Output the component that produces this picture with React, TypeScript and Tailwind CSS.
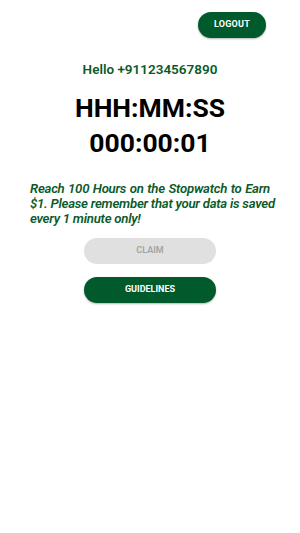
import React from "react";

export default function App() {
  return (
    <div
      className="w-[300px] h-[533px] bg-white flex flex-col"
      style={{ fontFamily: "Roboto, 'Liberation Sans', sans-serif" }}
    >
      <div className="flex justify-end pt-[12px] pr-[34px]">
        <button className="w-[68px] h-[26px] rounded-full bg-[#005a2c] text-white text-[9px] font-bold tracking-[0.2px] shadow-[0_1px_2px_rgba(0,0,0,0.3)]">
          LOGOUT
        </button>
      </div>
      <div className="mt-[23px] text-center text-[13.5px] font-semibold text-[#0b5a2a] leading-[16px]">
        Hello +911234567890
      </div>
      <div className="mt-[13px] text-center text-[26.5px] font-bold text-black leading-[35px]">
        <div>HHH:MM:SS</div>
        <div>000:00:01</div>
      </div>
      <div className="mt-[21px] px-[30px] text-[13.2px] italic font-semibold text-[#0b5a2a] leading-[15px] tracking-[-0.25px]">
        <p className="whitespace-nowrap text-justify [text-align-last:justify]">Reach 100 Hours on the Stopwatch to Earn</p>
        <p className="whitespace-nowrap text-justify [text-align-last:justify]">$1. Please remember that your data is saved</p>
        <p className="whitespace-nowrap">every 1 minute only!</p>
      </div>
      <div className="mt-[12px] flex flex-col items-center gap-[13px]">
        <button className="w-[132px] h-[26px] rounded-full bg-[#e0e0e0] text-[#a3a3a3] text-[9px] font-semibold">
          CLAIM
        </button>
        <button className="w-[132px] h-[26px] rounded-full bg-[#005a2c] text-white text-[9px] font-bold shadow-[0_1px_2px_rgba(0,0,0,0.3)]">
          GUIDELINES
        </button>
      </div>
    </div>
  );
}
